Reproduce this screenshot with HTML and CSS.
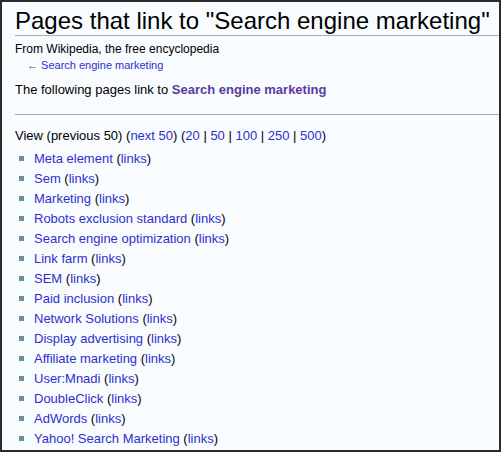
FILE: index.html
```html
<!DOCTYPE html>
<html>
<head>
<meta charset="utf-8">
<link rel="stylesheet" href="styles.css">
</head>
<body>
<div class="frame">
  <h1 class="title">Pages that link to "Search engine marketing"</h1>
  <div class="sub">From Wikipedia, the free encyclopedia</div>
  <div class="back">← <a class="lnk" href="#">Search engine marketing</a></div>
  <p class="intro">The following pages link to <a class="bold" href="#">Search engine marketing</a></p>
  <hr class="rule">
  <p class="view">View (previous 50) (<a class="lnk" href="#">next 50</a>) (<a class="lnk" href="#">20</a> | <a class="lnk" href="#">50</a> | <a class="lnk" href="#">100</a> | <a class="lnk" href="#">250</a> | <a class="lnk" href="#">500</a>)</p>
  <ul class="list">
    <li><a class="lnk" href="#">Meta element</a> (<a class="lnk" href="#">links</a>)</li>
    <li><a class="lnk" href="#">Sem</a> (<a class="lnk" href="#">links</a>)</li>
    <li><a class="lnk" href="#">Marketing</a> (<a class="lnk" href="#">links</a>)</li>
    <li><a class="lnk" href="#">Robots exclusion standard</a> (<a class="lnk" href="#">links</a>)</li>
    <li><a class="lnk" href="#">Search engine optimization</a> (<a class="lnk" href="#">links</a>)</li>
    <li><a class="lnk" href="#">Link farm</a> (<a class="lnk" href="#">links</a>)</li>
    <li><a class="lnk" href="#">SEM</a> (<a class="lnk" href="#">links</a>)</li>
    <li><a class="lnk" href="#">Paid inclusion</a> (<a class="lnk" href="#">links</a>)</li>
    <li><a class="lnk" href="#">Network Solutions</a> (<a class="lnk" href="#">links</a>)</li>
    <li><a class="lnk" href="#">Display advertising</a> (<a class="lnk" href="#">links</a>)</li>
    <li><a class="lnk" href="#">Affiliate marketing</a> (<a class="lnk" href="#">links</a>)</li>
    <li><a class="lnk" href="#">User:Mnadi</a> (<a class="lnk" href="#">links</a>)</li>
    <li><a class="lnk" href="#">DoubleClick</a> (<a class="lnk" href="#">links</a>)</li>
    <li><a class="lnk" href="#">AdWords</a> (<a class="lnk" href="#">links</a>)</li>
    <li><a class="lnk" href="#">Yahoo! Search Marketing</a> (<a class="lnk" href="#">links</a>)</li>
  </ul>
</div>
</body>
</html>
```
FILE: styles.css
```css
html, body {
  margin: 0;
  padding: 0;
  background: #2b2b2b;
}
.frame {
  box-sizing: border-box;
  width: 501px;
  height: 452px;
  border: 2px solid #2b2b2b;
  background: #f8fcff;
  padding: 0 0 0 13px;
  overflow: hidden;
  font-family: "Liberation Sans", Arial, sans-serif;
  color: #000;
}
a { text-decoration: none; }
.lnk { color: #2f2fcc; }
.bold { color: #5a3a9e; font-weight: bold; }
.title {
  margin: 0;
  padding: 4px 0 0 0;
  font-size: 24px;
  font-weight: normal;
  line-height: 29px;
  border-bottom: 1px solid #aaa;
  white-space: nowrap;
}
.sub {
  margin-top: 6px;
  font-size: 12px;
  line-height: 15px;
}
.back {
  margin: 1px 0 0 12px;
  font-size: 11px;
  line-height: 15px;
  color: #555;
}
.intro {
  margin: 9px 0 0 0;
  font-size: 13px;
  line-height: 16px;
}
.rule {
  margin: 16px 0 0 0;
  border: 0;
  border-top: 1px solid #aaa;
  height: 0;
}
.view {
  margin: 13px 0 0 0;
  font-size: 13px;
  line-height: 16px;
}
.list {
  margin: 5px 0 0 0;
  padding: 0 0 0 19px;
  list-style: none;
  font-size: 13px;
}
.list li {
  position: relative;
  line-height: 20px;
}
.list li::before {
  content: "";
  position: absolute;
  left: -15px;
  top: 7px;
  width: 5px;
  height: 5px;
  background: #6a8fa0;
}
```
